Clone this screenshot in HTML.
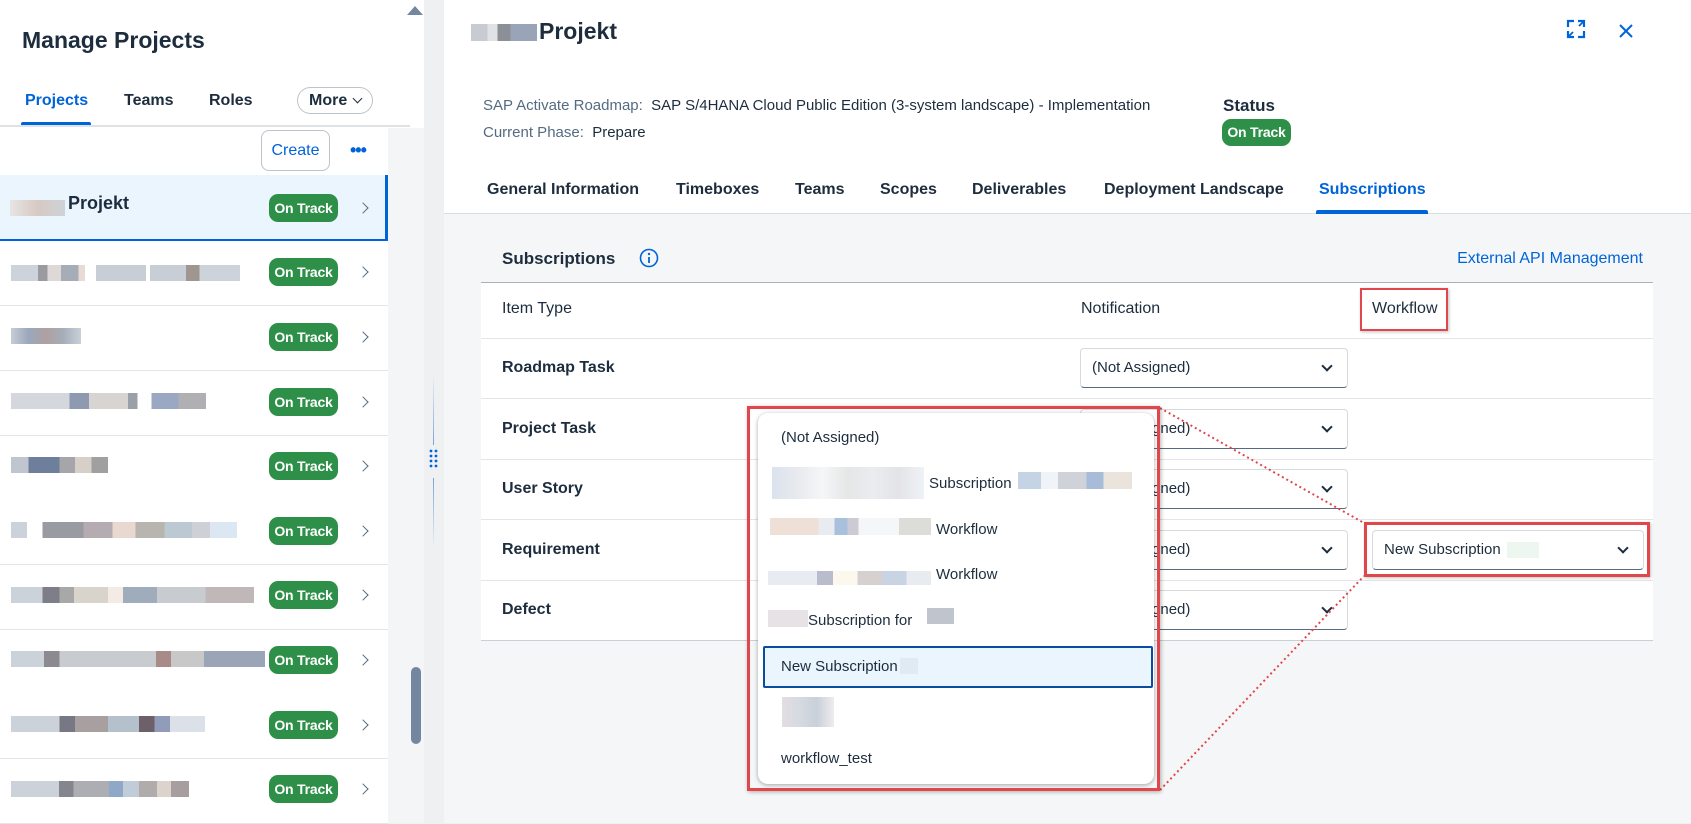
<!DOCTYPE html>
<html><head><meta charset="utf-8"><style>
*{box-sizing:border-box;margin:0;padding:0}
body{width:1691px;height:823px;overflow:hidden;background:#eef0f2;font-family:"Liberation Sans",Arial,sans-serif;color:#1d2d3e;position:relative}
.a{position:absolute}
.badge{position:absolute;background:#2e8f48;color:#fff;font-weight:bold;font-size:14px;border-radius:9px;text-align:center;line-height:28px;height:28px;width:69px;white-space:nowrap;letter-spacing:-0.2px}
.chev{position:absolute;width:8px;height:8px;border-right:1.5px solid #556b82;border-top:1.5px solid #556b82;transform:rotate(45deg)}
.blur{position:absolute;height:16px}
.row{position:absolute;left:0;width:388px;height:65px;border-bottom:1px solid #e5e5e5;background:#fff}
.sel{position:absolute;left:1080px;width:268px;height:40px;background:#fff;border:1px solid #d5dadd;border-bottom:1px solid #556b82;border-radius:4px;font-size:15px;line-height:38px;padding-left:11px;color:#1d2d3e}
.dchev{position:absolute;right:16px;top:13px;width:8px;height:8px;border-right:2px solid #1d2d3e;border-bottom:2px solid #1d2d3e;transform:rotate(45deg)}
.lab{position:absolute;left:502px;font-size:16px;font-weight:bold}
.tr{position:absolute;left:481px;width:1172px;background:#fff;border-bottom:1px solid #e5e5e5}
.it{position:absolute;left:781px;font-size:15px;color:#1d2d3e}
</style></head><body>
<div class="a" style="left:0;top:0;width:424px;height:823px;background:#fff"></div>
<div class="a" style="left:388px;top:128px;width:36px;height:695px;background:#f4f5f6"></div>
<div class="a" style="left:407px;top:6px;width:0;height:0;border-left:8px solid transparent;border-right:8px solid transparent;border-bottom:9px solid #7388a0"></div>
<div class="a" style="left:411px;top:667px;width:10px;height:77px;border-radius:5px;background:#7388a0"></div>
<div class="a" style="left:22px;top:27px;font-size:23px;font-weight:bold">Manage Projects</div>
<div class="a" style="left:25px;top:92px;font-size:16px;font-weight:bold;color:#0064d9">Projects</div>
<div class="a" style="left:21px;top:122px;width:70px;height:4px;background:#0064d9;border-radius:2px 2px 0 0"></div>
<div class="a" style="left:124px;top:92px;font-size:16px;font-weight:bold">Teams</div>
<div class="a" style="left:209px;top:92px;font-size:16px;font-weight:bold">Roles</div>
<div class="a" style="left:297px;top:87px;width:76px;height:27px;border:1px solid #bcc3ca;border-radius:14px;font-size:16px;font-weight:bold;padding-left:11px;line-height:25px">More</div>
<div class="a" style="left:354px;top:95px;width:7px;height:7px;border-right:1.5px solid #1d2d3e;border-bottom:1.5px solid #1d2d3e;transform:rotate(45deg)"></div>
<div class="a" style="left:0;top:125px;width:410px;height:2px;background:#e0e3e6"></div>
<div class="a" style="left:261px;top:130px;width:69px;height:41px;border:1px solid #bcc3ca;border-radius:8px;font-size:16px;color:#0064d9;text-align:center;line-height:39px">Create</div>
<div class="a" style="left:350px;top:140px;font-size:18px;font-weight:bold;color:#0064d9;letter-spacing:-1px">•••</div>

<div class="row" style="top:175px;height:66px;background:#eaf5fe;border-bottom:2px solid #0064d9"></div>
<div class="a" style="left:385px;top:175px;width:3px;height:66px;background:#0064d9"></div>
<div class="blur" style="left:10px;top:200px;width:55px;height:16px;background:linear-gradient(90deg,#e5e5e5,#d8c9c2,#cdd2d8)"></div>
<div class="a" style="left:68px;top:193px;font-size:18px;font-weight:bold">Projekt</div>
<div class="badge" style="left:269px;top:194px">On Track</div>
<div class="chev" style="left:359px;top:204px"></div>

<div class="row" style="top:241px"></div>
<div class="blur" style="left:11px;top:265px;width:135px;background:linear-gradient(90deg,#cdd3da 0 20%,#9b9aa0 20% 27%,#dcd9d8 27% 37%,#a6adb8 37% 50%,#e8dad4 50% 55%,#fff 55% 63%,#c8ced6 63% 100%)"></div>
<div class="blur" style="left:150px;top:265px;width:90px;background:linear-gradient(90deg,#c8ced6 0 40%,#9f9690 40% 55%,#cdd3da 55%)"></div>
<div class="badge" style="left:269px;top:258px">On Track</div><div class="chev" style="left:359px;top:268px"></div>
<div class="row" style="top:306px"></div>
<div class="blur" style="left:11px;top:328px;width:70px;background:linear-gradient(90deg,#c8ccd4,#9aa8bc,#b0a0a0,#a5aebb,#c9d0d8)"></div>
<div class="badge" style="left:269px;top:323px">On Track</div><div class="chev" style="left:359px;top:333px"></div>
<div class="row" style="top:371px"></div>
<div class="blur" style="left:11px;top:393px;width:195px;background:linear-gradient(90deg,#d4d8de 0 30%,#8e9ab0 30% 40%,#d8d4d2 40% 60%,#9aa0a8 60% 65%,#fff 65% 72%,#9aa8c4 72% 86%,#b0b0b4 86%)"></div>
<div class="badge" style="left:269px;top:388px">On Track</div><div class="chev" style="left:359px;top:398px"></div>
<div class="row" style="top:436px"></div>
<div class="blur" style="left:11px;top:457px;width:97px;background:linear-gradient(90deg,#c0c6d0 0 18%,#6e7f9c 18% 50%,#a6a6aa 50% 66%,#d6d0c8 66% 83%,#a0a0a0 83%)"></div>
<div class="badge" style="left:269px;top:452px">On Track</div><div class="chev" style="left:359px;top:462px"></div>
<div class="row" style="top:500px"></div>
<div class="blur" style="left:11px;top:522px;width:226px;background:linear-gradient(90deg,#ccd2da 0 7%,#fff 7% 14%,#9a9aa2 14% 32%,#b4acb0 32% 45%,#e8d8d0 45% 55%,#b8b4b0 55% 68%,#bcc8d2 68% 80%,#cfd0d6 80% 88%,#dbe8f3 88%)"></div>
<div class="badge" style="left:269px;top:517px">On Track</div><div class="chev" style="left:359px;top:527px"></div>
<div class="row" style="top:565px"></div>
<div class="blur" style="left:11px;top:587px;width:243px;background:linear-gradient(90deg,#ccd2da 0 13%,#7e7e88 13% 20%,#a8a8a8 20% 26%,#d8d4cc 26% 40%,#f4ece4 40% 46%,#9eacbc 46% 60%,#c8ccd0 60% 80%,#c0b8b8 80%)"></div>
<div class="badge" style="left:269px;top:581px">On Track</div><div class="chev" style="left:359px;top:591px"></div>
<div class="row" style="top:630px"></div>
<div class="blur" style="left:11px;top:651px;width:254px;background:linear-gradient(90deg,#ccd2da 0 13%,#8a8a90 13% 19%,#c8ccd0 19% 57%,#a88a86 57% 63%,#c8c8c8 63% 76%,#9aa6b8 76% 100%)"></div>
<div class="badge" style="left:269px;top:646px">On Track</div><div class="chev" style="left:359px;top:656px"></div>
<div class="row" style="top:694px"></div>
<div class="blur" style="left:11px;top:716px;width:194px;background:linear-gradient(90deg,#ccd2da 0 25%,#787884 25% 33%,#a8a0a0 33% 50%,#b4c0cc 50% 66%,#6e6068 66% 74%,#909cb8 74% 82%,#dce0e8 82%)"></div>
<div class="badge" style="left:269px;top:711px">On Track</div><div class="chev" style="left:359px;top:721px"></div>
<div class="row" style="top:759px"></div>
<div class="blur" style="left:11px;top:781px;width:178px;background:linear-gradient(90deg,#ccd2da 0 27%,#858590 27% 35%,#acaeb4 35% 55%,#90a8c8 55% 63%,#c0ccd8 63% 72%,#b0acac 72% 82%,#dcd4cc 82% 90%,#a89ea0 90%)"></div>
<div class="badge" style="left:269px;top:775px">On Track</div><div class="chev" style="left:359px;top:785px"></div>

<div class="a" style="left:433px;top:375px;width:1px;height:70px;background:linear-gradient(#eef0f2,#7aa4d8)"></div>
<div class="a" style="left:433px;top:478px;width:1px;height:70px;background:linear-gradient(#7aa4d8,#eef0f2)"></div>
<svg class="a" style="left:429px;top:449px" width="9" height="20"><g fill="#0064d9"><circle cx="2" cy="2" r="1.4"/><circle cx="7" cy="2" r="1.4"/><circle cx="2" cy="7" r="1.4"/><circle cx="7" cy="7" r="1.4"/><circle cx="2" cy="12" r="1.4"/><circle cx="7" cy="12" r="1.4"/><circle cx="2" cy="17" r="1.4"/><circle cx="7" cy="17" r="1.4"/></g></svg>

<div class="a" style="left:444px;top:0;width:1247px;height:823px;background:#f5f6f7"></div>
<div class="a" style="left:444px;top:0;width:1247px;height:214px;background:#fff;border-bottom:1px solid #d9dde1"></div>
<div class="blur" style="left:471px;top:24px;width:66px;height:17px;background:linear-gradient(90deg,#c8ccd2 0 25%,#e0e2e5 25% 40%,#8c9096 40% 60%,#9aa4b8 60%)"></div>
<div class="a" style="left:539px;top:18px;font-size:23px;font-weight:bold">Projekt</div>
<svg class="a" style="left:1566px;top:19px" width="20" height="20" fill="none" stroke="#0064d9" stroke-width="2.2"><path d="M2 8V2h6M12 2h6v6M18 12v6h-6M8 18H2v-6"/><path d="M18 2l-5 5M2 18l5-5" stroke-width="1.8"/></svg>
<svg class="a" style="left:1619px;top:24px" width="14" height="14" stroke="#0064d9" stroke-width="2"><path d="M1 1l12 12M13 1L1 13"/></svg>
<div class="a" style="left:483px;top:97px;font-size:15px;color:#556b82;white-space:nowrap">SAP Activate Roadmap:&nbsp; <span style="color:#1d2d3e">SAP S/4HANA Cloud Public Edition (3-system landscape) - Implementation</span></div>
<div class="a" style="left:483px;top:124px;font-size:15px;color:#556b82">Current Phase:&nbsp; <span style="color:#1d2d3e">Prepare</span></div>
<div class="a" style="left:1223px;top:96px;font-size:17px;font-weight:bold">Status</div>
<div class="badge" style="left:1222px;top:119px;height:27px;line-height:27px">On Track</div>
<div class="a" style="top:181px;left:487px;font-size:16px;font-weight:bold;white-space:nowrap">
<span class="a" style="left:0">General Information</span><span class="a" style="left:189px">Timeboxes</span><span class="a" style="left:308px">Teams</span><span class="a" style="left:393px">Scopes</span><span class="a" style="left:485px">Deliverables</span><span class="a" style="left:617px">Deployment Landscape</span><span class="a" style="left:832px;color:#0064d9">Subscriptions</span></div>
<div class="a" style="left:1316px;top:210px;width:112px;height:4px;background:#0064d9;border-radius:2px 2px 0 0"></div>

<div class="a" style="left:502px;top:249px;font-size:17px;font-weight:bold">Subscriptions</div>
<svg class="a" style="left:639px;top:248px" width="20" height="20"><circle cx="10" cy="10" r="8.5" fill="none" stroke="#0064d9" stroke-width="1.6"/><circle cx="10" cy="6" r="1.2" fill="#0064d9"/><path d="M10 9v6" stroke="#0064d9" stroke-width="1.8"/></svg>
<div class="a" style="left:1393px;top:250px;font-size:16px;color:#0064d9;width:250px;text-align:right;white-space:nowrap">External API Management</div>

<div class="tr" style="top:282px;height:57px;border-top:1px solid #a8b2bd"></div>
<div class="a" style="left:502px;top:300px;font-size:16px">Item Type</div>
<div class="a" style="left:1081px;top:300px;font-size:16px">Notification</div>
<div class="a" style="left:1360px;top:288px;width:88px;height:43px;border:2px solid #e0474c;box-shadow:1px 1px 3px rgba(0,0,0,.25)"></div>
<div class="a" style="left:1372px;top:300px;font-size:16px">Workflow</div>

<div class="tr" style="top:339px;height:60px"></div><div class="lab" style="top:359px">Roadmap Task</div>
<div class="tr" style="top:399px;height:61px"></div><div class="lab" style="top:420px">Project Task</div>
<div class="tr" style="top:460px;height:60px"></div><div class="lab" style="top:480px">User Story</div>
<div class="tr" style="top:520px;height:61px"></div><div class="lab" style="top:541px">Requirement</div>
<div class="tr" style="top:581px;height:60px;border-bottom:1px solid #c8cfd6"></div><div class="lab" style="top:601px">Defect</div>

<div class="sel" style="top:348px">(Not Assigned)<div class="dchev"></div></div>
<div class="sel" style="top:409px">(Not Assigned)<div class="dchev"></div></div>
<div class="sel" style="top:469px">(Not Assigned)<div class="dchev"></div></div>
<div class="sel" style="top:530px">(Not Assigned)<div class="dchev"></div></div>
<div class="sel" style="top:590px">(Not Assigned)<div class="dchev"></div></div>

<div class="sel" style="left:1372px;top:530px;width:272px">New Subscription<span style="display:inline-block;width:32px;height:16px;background:#eef6f0;vertical-align:middle;margin-left:6px"></span><div class="dchev"></div></div>
<div class="a" style="left:1364px;top:522px;width:286px;height:55px;border:3px solid #e0474c;box-shadow:1px 1px 3px rgba(0,0,0,.25)"></div>

<svg class="a" style="left:0;top:0" width="1691" height="823"><g stroke="#e0474c" stroke-width="2" stroke-dasharray="2 3" fill="none"><path d="M1160 408L1364 523"/><path d="M1160 790L1364 576"/></g></svg>

<div class="a" style="left:758px;top:413px;width:396px;height:371px;background:#fff;border-radius:10px;box-shadow:0 1px 4px rgba(0,0,0,.35)"></div>
<div class="it" style="top:429px">(Not Assigned)</div>
<div class="blur" style="left:772px;top:467px;width:152px;height:32px;background:linear-gradient(90deg,#dbe3ee,#e8eaee,#f4f6f8,#e6e6e6,#eaecef,#e4e4e8,#eef2f6)"></div>
<div class="it" style="left:929px;top:475px">Subscription</div>
<div class="blur" style="left:1018px;top:472px;width:114px;height:17px;background:linear-gradient(90deg,#c4d4e4 0 20%,#f0f4f8 20% 35%,#cfd2d8 35% 60%,#a6bcd8 60% 75%,#ebe4dc 75%)"></div>
<div class="blur" style="left:770px;top:518px;width:161px;height:17px;background:linear-gradient(90deg,#eee0d6 0 30%,#e8ecf0 30% 40%,#a8c0dc 40% 48%,#cccad2 48% 55%,#f4f6f8 55% 80%,#dcdcd8 80%)"></div>
<div class="it" style="left:936px;top:521px">Workflow</div>
<div class="blur" style="left:768px;top:571px;width:163px;height:14px;background:linear-gradient(90deg,#e8ecf2 0 30%,#b8bccc 30% 40%,#fdf8ee 40% 55%,#d6d0d0 55% 70%,#c8d4e4 70% 85%,#e8ecf0 85%)"></div>
<div class="it" style="left:936px;top:566px">Workflow</div>
<div class="blur" style="left:768px;top:610px;width:40px;height:17px;background:#e6e2e6"></div>
<div class="it" style="left:808px;top:612px">Subscription for</div>
<div class="blur" style="left:927px;top:608px;width:27px;height:16px;background:#c0c4cc"></div>
<div class="a" style="left:763px;top:646px;width:390px;height:42px;background:#eaf5fe;border:2px solid #0a4ca0;border-radius:2px"></div>
<div class="it" style="top:658px">New Subscription<span style="display:inline-block;width:18px;height:16px;background:#dfeaf3;margin-left:2px;vertical-align:top"></span></div>
<div class="blur" style="left:782px;top:697px;width:52px;height:30px;background:linear-gradient(90deg,#e2dee2,#d6dae2,#c8d0da,#f0ecec)"></div>
<div class="it" style="top:750px">workflow_test</div>
<div class="a" style="left:747px;top:406px;width:413px;height:385px;border:3px solid #e0474c;box-shadow:1px 1px 4px rgba(0,0,0,.3)"></div>
</body></html>
